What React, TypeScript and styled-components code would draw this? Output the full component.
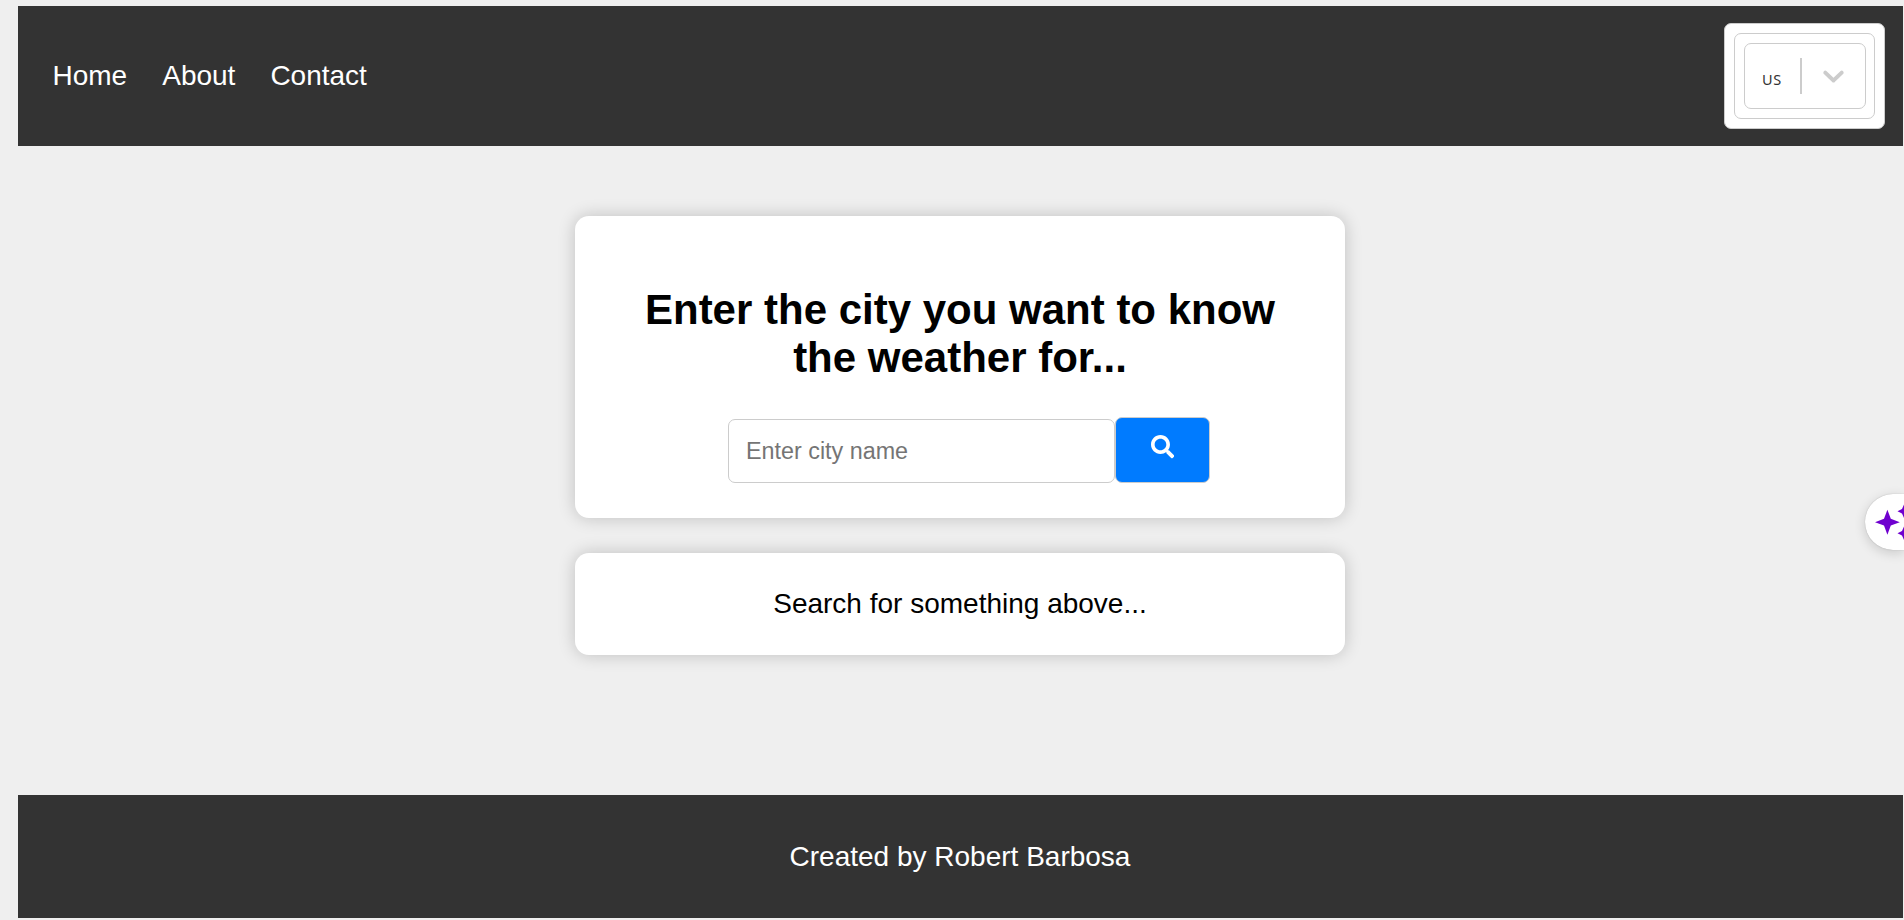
import React from "react";
import styled, { createGlobalStyle } from "styled-components";
import { FaSearch } from "react-icons/fa";

const GlobalStyle = createGlobalStyle`
  html, body { margin: 0; padding: 0; background: #efefef; overflow: hidden; }
  * { box-sizing: border-box; }
`;

const Page = styled.div`
  height: 920px;
  padding: 6px 1px 2px 18px;
  display: flex;
  flex-direction: column;
  font-family: "Liberation Sans", Arial, sans-serif;
  font-size: 28px;
  line-height: 32px;
  color: #000;
`;

const Header = styled.header`
  height: 140px;
  padding: 17px 18px 17px 34.5px;
  display: flex;
  align-items: center;
  justify-content: space-between;
  background: #333;
`;

const Nav = styled.nav`
  display: flex;
  gap: 35px;
`;

const NavLink = styled.a`
  color: #fff;
`;

const Frame = styled.div`
  padding: 9px;
  background: #fff;
  border: 1px solid #ccc;
  border-radius: 7px;
`;

const InnerFrame = styled(Frame)`
  padding-right: 8px;
`;

const Control = styled(Frame)`
  width: 122px;
  height: 66px;
  padding: 0;
  display: flex;
  align-items: center;
`;

const Value = styled.span`
  width: 55px;
  padding: 6px 0 0 17px;
  font: 14.5px/22px "Noto Sans", sans-serif;
  letter-spacing: 0.7px;
  color: #333;
`;

const Separator = styled.span`
  width: 2px;
  height: 36px;
  background: #ccc;
`;

const Chevron = styled.svg`
  width: 35px;
  height: 35px;
  margin: 0 0 1px 14px;
  fill: #ccc;
`;

const Main = styled.main`
  flex: 1;
  padding: 70px 1px 0 0;
  display: flex;
  flex-direction: column;
  align-items: center;
  gap: 35px;
`;

const Card = styled.section<{ $height: number }>`
  width: 770px;
  height: ${(p) => p.$height}px;
  padding: 35px;
  border-radius: 14px;
  background: #fff;
  text-align: center;
  box-shadow: 0 0 17.5px rgba(0, 0, 0, 0.2);
`;

const Title = styled.h1`
  margin: 35px 0;
  font-size: 42px;
  line-height: 48px;
`;

const SearchForm = styled.form`
  display: flex;
  align-items: flex-end;
  margin-left: 118px;
`;

const CityInput = styled.input`
  width: 387px;
  height: 64px;
  padding: 0 17px;
  border: 1px solid #ccc;
  border-radius: 7px;
  font: 23.33px "Liberation Sans", Arial, sans-serif;
  &::placeholder { color: #757575; }
`;

const SearchButton = styled.button`
  width: 95px;
  height: 66px;
  padding: 0 0 6px;
  display: flex;
  align-items: center;
  justify-content: center;
  border: 1px solid #ccc;
  border-radius: 7px;
  background: #007bff;
  color: #fff;
  font-size: 23.33px;
`;

const Footer = styled.footer`
  height: 123px;
  padding-right: 1px;
  display: flex;
  align-items: center;
  justify-content: center;
  background: #333;
  color: #fff;
`;

const Assistant = styled.div`
  position: absolute;
  top: 494px;
  right: 0;
  width: 39px;
  height: 56px;
  border-radius: 28px 0 0 28px;
  background: #fff;
  box-shadow: 0 3px 12px rgba(0, 0, 0, 0.16), 0 0 1px rgba(0, 0, 0, 0.3);
`;

const Sparkles = styled.svg`
  display: block;
  width: 39px;
  height: 56px;
  fill: #6f00cf;
`;

export default function App() {
  return (
    <>
      <GlobalStyle />
      <Page>
        <Header>
          <Nav>
            <NavLink>Home</NavLink>
            <NavLink>About</NavLink>
            <NavLink>Contact</NavLink>
          </Nav>
          <Frame>
            <InnerFrame>
              <Control>
                <Value>US</Value>
                <Separator />
                <Chevron viewBox="0 0 20 20">
                  <path d="M4.516 7.548c0.436-0.446 1.043-0.481 1.576 0l3.908 3.747 3.908-3.747c0.533-0.481 1.141-0.446 1.574 0 0.436 0.445 0.408 1.197 0 1.615-0.406 0.418-4.695 4.502-4.695 4.502-0.217 0.223-0.502 0.335-0.787 0.335s-0.57-0.112-0.789-0.335c0 0-4.287-4.084-4.695-4.502s-0.436-1.17 0-1.615z" />
                </Chevron>
              </Control>
            </InnerFrame>
          </Frame>
        </Header>
        <Main>
          <Card $height={302}>
            <Title>Enter the city you want to know the weather for...</Title>
            <SearchForm>
              <CityInput placeholder="Enter city name" />
              <SearchButton type="button">
                <FaSearch />
              </SearchButton>
            </SearchForm>
          </Card>
          <Card $height={102}>Search for something above...</Card>
        </Main>
        <Footer>Created by Robert Barbosa</Footer>
      </Page>
      <Assistant>
        <Sparkles viewBox="0 0 39 56">
          <path d="M22.400 15.700L25.800 24.800L34.800 28.200L25.800 31.600L22.400 40.700L19 31.600L10 28.200L19 24.800Z" />
          <path d="M39 10.500l2 4.500 4.500 2.200-4.500 2.200-2 4.500-2-4.500-4.500-2.200 4.500-2.200z" />
          <path d="M39 32.500l2 4.500 4.500 2.200-4.500 2.200-2 4.500-2-4.500-4.500-2.200 4.500-2.200z" />
        </Sparkles>
      </Assistant>
    </>
  );
}
